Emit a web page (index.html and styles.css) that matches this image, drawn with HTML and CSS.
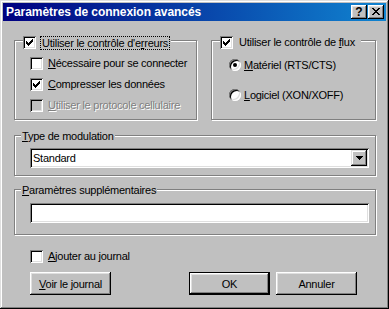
FILE: index.html
```html
<!DOCTYPE html>
<html lang="fr">
<head>
  <meta charset="UTF-8" />
  <title>Paramètres de connexion avancés</title>
  <link rel="stylesheet" href="styles.css">
</head>
<body>
  <div class="window">
    <div class="titlebar">
      <span class="title">Paramètres de connexion avancés</span>
      <div class="title-buttons">
        <span class="tbtn">?</span>
        <span class="tbtn">
          <svg width="8" height="7" viewBox="0 0 8 7"><path d="M0 0h2v1h-2z M6 0h2v1h-2z M1 1h2v1h-2z M5 1h2v1h-2z M2 2h4v1h-4z M3 3h2v1h-2z M2 4h4v1h-4z M1 5h2v1h-2z M5 5h2v1h-2z M0 6h2v1h-2z M6 6h2v1h-2z"/></svg>
        </span>
      </div>
    </div>

    <div class="contenu">
      <div class="group-row">
        <div class="group group-erreurs">
          <div class="group-title">
            <span class="check on"><svg width="13" height="13" viewBox="0 0 13 13"><path d="M9 3h1v1h-1z M8 4h2v1h-2z M3 5h1v1h-1z M7 5h3v1h-3z M3 6h2v1h-2z M6 6h3v1h-3z M3 7h5v1h-5z M4 8h3v1h-3z M5 9h1v1h-1z"/></svg></span>
            <span class="label focus">Utiliser le contrôle d'e<u>r</u>reurs</span>
          </div>
          <div class="group-body">
            <div class="option"><span class="check"></span><span class="label"><u>N</u>écessaire pour se connecter</span></div>
            <div class="option"><span class="check on"><svg width="13" height="13" viewBox="0 0 13 13"><path d="M9 3h1v1h-1z M8 4h2v1h-2z M3 5h1v1h-1z M7 5h3v1h-3z M3 6h2v1h-2z M6 6h3v1h-3z M3 7h5v1h-5z M4 8h3v1h-3z M5 9h1v1h-1z"/></svg></span><span class="label"><u>C</u>ompresser les données</span></div>
            <div class="option disabled"><span class="check"></span><span class="label"><u>U</u>tiliser le protocole cellulaire</span></div>
          </div>
        </div>

        <div class="group group-flux">
          <div class="group-title">
            <span class="check on"><svg width="13" height="13" viewBox="0 0 13 13"><path d="M9 3h1v1h-1z M8 4h2v1h-2z M3 5h1v1h-1z M7 5h3v1h-3z M3 6h2v1h-2z M6 6h3v1h-3z M3 7h5v1h-5z M4 8h3v1h-3z M5 9h1v1h-1z"/></svg></span>
            <span class="label">Utiliser le contrôle de <u>f</u>lux</span>
          </div>
          <div class="group-body">
            <div class="radio-opt"><span class="radio on"></span><span class="label"><u>M</u>atériel (RTS/CTS)</span></div>
            <div class="radio-opt"><span class="radio"></span><span class="label"><u>L</u>ogiciel (XON/XOFF)</span></div>
          </div>
        </div>
      </div>

      <div class="group group-modulation">
        <div class="group-title"><span class="label"><u>T</u>ype de modulation</span></div>
        <div class="group-body">
          <div class="combo">
            <span class="combo-text">Standard</span>
            <span class="combo-btn"><svg width="7" height="4" viewBox="0 0 7 4"><path d="M0 0h7v1h-7z M1 1h5v1h-5z M2 2h3v1h-3z M3 3h1v1h-1z"/></svg></span>
          </div>
        </div>
      </div>

      <div class="group group-params">
        <div class="group-title"><span class="label"><u>P</u>aramètres supplémentaires</span></div>
        <div class="group-body">
          <div class="field"></div>
        </div>
      </div>

      <div class="option journal"><span class="check"></span><span class="label"><u>A</u>jouter au journal</span></div>

      <div class="boutons">
        <span class="btn"><span><u>V</u>oir le journal</span></span>
        <span class="btn btn-ok">OK</span>
        <span class="btn btn-annuler">Annuler</span>
      </div>
    </div>
  </div>
</body>
</html>
```

FILE: styles.css
```css
body {
  margin: 0;
  font-family: "Liberation Sans", Arial, sans-serif;
  font-size: 11px;
  letter-spacing: -0.25px;
  color: #000;
  background-color: #c0c0c0;
}

.window {
  width: 389px;
  height: 309px;
  box-sizing: border-box;
  padding: 3px;
  background-color: #c0c0c0;
  box-shadow: inset -1px -1px #000, inset 1px 1px #dfdfdf, inset -2px -2px #808080, inset 2px 2px #fff;
}

.titlebar {
  height: 18px;
  display: flex;
  align-items: center;
  padding: 0 2px 0 3px;
  background: linear-gradient(to right, #000080, #1084d0);
  color: #fff;
  font-weight: bold;
  font-size: 12px;
  letter-spacing: -0.05px;
}

.title {
  flex: 1;
  line-height: 18px;
}

.title-buttons {
  display: flex;
  gap: 1px;
}

.tbtn {
  width: 16px;
  height: 14px;
  box-sizing: border-box;
  display: flex;
  align-items: center;
  justify-content: center;
  padding-bottom: 1px;
  background-color: #c0c0c0;
  color: #000;
  font-size: 12px;
  line-height: 12px;
  box-shadow: inset -1px -1px #000, inset 1px 1px #fff, inset -2px -2px #808080, inset 2px 2px #dfdfdf;
}

.contenu {
  padding: 19px 10px 0 11px;
}

.group-row {
  display: flex;
  gap: 14px;
}

.group {
  box-sizing: border-box;
  border: 1px solid #808080;
  box-shadow: inset 1px 1px #fff, 1px 1px #fff;
}

.group-title {
  display: flex;
  align-items: center;
  width: max-content;
  background-color: #c0c0c0;
}

.label {
  line-height: 13px;
  white-space: nowrap;
}

u {
  text-underline-offset: 1px;
}

/* contrôle d'erreurs */
.group-erreurs {
  width: 183px;
}

.group-erreurs .group-title {
  margin: -5px 0 4px 8px;
  padding-right: 2px;
}

.group-erreurs .group-body {
  padding: 0 0 3px 15px;
}

.focus {
  margin-left: 5px;
  padding: 0 1px;
  line-height: 12px;
  outline: 1px dotted #000;
}

/* contrôle de flux */
.group-flux {
  width: 165px;
}

.group-flux .group-title {
  margin: -5px 0 6px 8px;
  padding-right: 5px;
}

.group-flux .group-title .label {
  margin-left: 5px;
  padding: 0 1px;
}

.group-flux .group-body {
  display: flex;
  flex-direction: column;
  gap: 10px;
  padding-left: 17px;
}

.option {
  display: flex;
  align-items: center;
  height: 21px;
  gap: 5px;
}

.option.disabled .label {
  color: #808080;
  text-shadow: 1px 1px #fff;
}

.radio-opt {
  display: flex;
  align-items: center;
  height: 20px;
  gap: 3px;
}

.check {
  width: 13px;
  height: 13px;
  flex: none;
  box-sizing: border-box;
  background-color: #fff;
  box-shadow: inset 1px 1px #808080, inset -1px -1px #fff, inset 2px 2px #000, inset -2px -2px #dfdfdf;
}

.check svg {
  display: block;
}

.option.disabled .check {
  background-color: #c0c0c0;
}

.radio {
  width: 12px;
  height: 12px;
  flex: none;
  border-radius: 50%;
  background-color: #fff;
  display: flex;
  align-items: center;
  justify-content: center;
  box-shadow: inset 1px 1px #808080, inset -1px -1px #fff, inset 2px 2px #000, inset -2px -2px #dfdfdf;
}

.radio.on::after {
  content: "";
  width: 4px;
  height: 4px;
  border-radius: 50%;
  background-color: #000;
}

/* modulation */
.group-modulation {
  margin-top: 15px;
}

.group-modulation .group-title,
.group-params .group-title {
  margin: -6px 0 5px 6px;
  padding: 0 1px;
}

.group-modulation .group-body {
  padding: 0 6px 7px 15px;
}

.combo {
  height: 20px;
  box-sizing: border-box;
  padding: 2px;
  display: flex;
  align-items: center;
  background-color: #fff;
  box-shadow: inset 1px 1px #808080, inset -1px -1px #fff, inset 2px 2px #000, inset -2px -2px #dfdfdf;
}

.combo-text {
  flex: 1;
  padding-left: 1px;
  line-height: 16px;
}

.combo-btn {
  width: 16px;
  height: 16px;
  box-sizing: border-box;
  display: flex;
  align-items: center;
  justify-content: center;
  background-color: #c0c0c0;
  box-shadow: inset -1px -1px #000, inset 1px 1px #dfdfdf, inset -2px -2px #808080, inset 2px 2px #fff;
}

.combo-btn svg {
  display: block;
}

/* paramètres */
.group-params {
  margin-top: 13px;
}

.group-params .group-title {
  margin-bottom: 6px;
}

.group-params .group-body {
  padding: 0 6px 11px 15px;
}

.field {
  height: 20px;
  background-color: #fff;
  box-shadow: inset 1px 1px #808080, inset -1px -1px #fff, inset 2px 2px #000, inset -2px -2px #dfdfdf;
}

.journal {
  margin: 11px 0 0 16px;
}

.boutons {
  display: flex;
  margin: 5px 19px 0 16px;
}

.btn {
  width: 81px;
  height: 23px;
  box-sizing: border-box;
  display: flex;
  align-items: center;
  justify-content: center;
  background-color: #c0c0c0;
  box-shadow: inset -1px -1px #000, inset 1px 1px #fff, inset -2px -2px #808080, inset 2px 2px #dfdfdf;
}

.btn-ok {
  margin-left: auto;
  border: 1px solid #000;
}

.btn-annuler {
  margin-left: 6px;
}
```
